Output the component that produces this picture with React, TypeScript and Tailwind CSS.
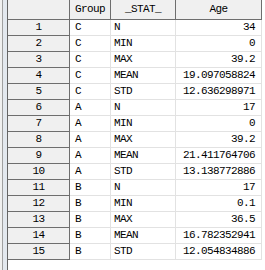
import React from 'react';

const rows: [string, string, string][] = [
  ['C', 'N', '34'],
  ['C', 'MIN', '0'],
  ['C', 'MAX', '39.2'],
  ['C', 'MEAN', '19.097058824'],
  ['C', 'STD', '12.636298971'],
  ['A', 'N', '17'],
  ['A', 'MIN', '0'],
  ['A', 'MAX', '39.2'],
  ['A', 'MEAN', '21.411764706'],
  ['A', 'STD', '13.138772886'],
  ['B', 'N', '17'],
  ['B', 'MIN', '0.1'],
  ['B', 'MAX', '36.5'],
  ['B', 'MEAN', '16.782352941'],
  ['B', 'STD', '12.054834886'],
];

const mono = { fontFamily: '"Liberation Mono", "DejaVu Sans Mono", monospace' };

export default function App() {
  return (
    <div className="w-[265px] h-[270px] bg-white flex overflow-hidden text-black text-[11px] tracking-[-0.6px] leading-none" style={mono}>
      {/* window frame on the left */}
      <div className="flex h-full">
        <div className="w-[2px] bg-[#f0f0f0]" />
        <div className="w-[1px] bg-[#a0a0a0]" />
        <div className="w-[4px] bg-[#e3e8ee]" />
        <div className="w-[1px] bg-[#646464]" />
      </div>

      <div className="flex flex-col">
        {/* header row */}
        <div className="grid grid-cols-[62px_41px_65px_86px] h-[20px]">
          <div className="bg-[#f0f0f0] border-r border-b border-[#6e6e6e]" />
          <div className="bg-[#f0f0f0] border-r border-b border-[#6e6e6e] flex items-center justify-center">Group</div>
          <div className="bg-[#f0f0f0] border-r border-b border-[#6e6e6e] flex items-center justify-center">_STAT_</div>
          <div className="bg-[#f0f0f0] border-r border-b border-[#6e6e6e] flex items-center justify-center">Age</div>
        </div>

        {rows.map(([group, stat, age], i) => (
          <div key={i} className="grid grid-cols-[62px_41px_65px_86px] h-[16px]">
            <div className="bg-[#f0f0f0] border-r border-b border-[#6e6e6e] flex items-center justify-center">{i + 1}</div>
            <div className="border-r border-b border-[#e2e2e2] flex items-center pl-[5px]">{group}</div>
            <div className="border-r border-b border-[#e2e2e2] flex items-center pl-[3px]">{stat}</div>
            <div className="border-r border-b border-[#e2e2e2] flex items-center justify-end pr-[6px]">{age}</div>
          </div>
        ))}
      </div>
    </div>
  );
}
